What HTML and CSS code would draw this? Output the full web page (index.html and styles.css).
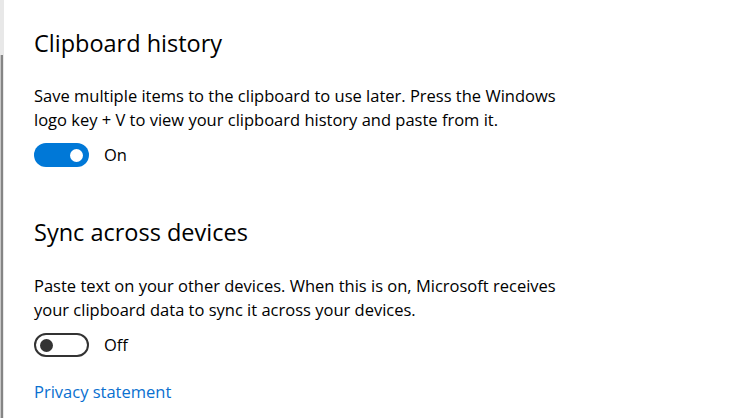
FILE: index.html
```html
<!DOCTYPE html>
<html>
<head>
<meta charset="utf-8">
<link rel="stylesheet" href="styles.css">
</head>
<body>
<div class="page">
  <div class="edge">
    <div class="edge-track"></div>
    <div class="edge-thumb"></div>
  </div>
  <main class="content">
    <section class="group">
      <h2 class="title">Clipboard history</h2>
      <p class="desc">Save multiple items to the clipboard to use later. Press the Windows<br>logo key + V to view your clipboard history and paste from it.</p>
      <div class="toggle-row">
        <span class="switch switch-on"><span class="knob"></span></span>
        <span class="state">On</span>
      </div>
    </section>
    <section class="group group-second">
      <h2 class="title">Sync across devices</h2>
      <p class="desc">Paste text on your other devices. When this is on, Microsoft receives<br>your clipboard data to sync it across your devices.</p>
      <div class="toggle-row">
        <span class="switch switch-off"><span class="knob"></span></span>
        <span class="state">Off</span>
      </div>
    </section>
    <a class="link" href="#">Privacy statement</a>
  </main>
</div>
</body>
</html>
```

FILE: styles.css
```css
html, body {
  margin: 0;
  padding: 0;
  background: #ffffff;
}
body {
  font-family: "Open Sans", "Noto Sans", sans-serif;
  color: #000000;
  width: 730px;
  height: 418px;
  overflow: hidden;
}
.page {
  display: flex;
  height: 418px;
}
.edge {
  width: 4px;
  display: flex;
  flex-direction: column;
  flex-shrink: 0;
}
.edge-track {
  height: 55px;
  background: #e8e8e8;
}
.edge-thumb {
  flex: 1;
  background: linear-gradient(to right, #c8c8c8 0, #c8c8c8 1px, #858585 1px, #858585 3px, #e8e8e8 3px);
}
.content {
  padding-left: 30px;
  flex: 1;
}
.group {
  display: flex;
  flex-direction: column;
}
.title {
  margin: 26px 0 0 0;
  font-size: 23.5px;
  line-height: 34px;
  font-weight: 400;
}
.group-second .title {
  margin-top: 48px;
}
.desc {
  margin: 24px 0 0 0;
  font-size: 16.5px;
  line-height: 24px;
}
.group-second .desc {
  margin-top: 25px;
}
.toggle-row {
  margin-top: 11px;
  display: flex;
  align-items: center;
  gap: 15px;
  height: 24px;
}
.switch {
  box-sizing: border-box;
  width: 55px;
  height: 24px;
  border-radius: 12px;
  display: flex;
  align-items: center;
}
.switch-on {
  background: #0078d7;
  justify-content: flex-end;
  padding-right: 6px;
}
.switch-on .knob {
  width: 13px;
  height: 13px;
  border-radius: 50%;
  background: #ffffff;
}
.switch-off {
  border: 2.5px solid #333333;
  padding-left: 4px;
}
.switch-off .knob {
  width: 13px;
  height: 13px;
  border-radius: 50%;
  background: #333333;
}
.state {
  font-size: 16.5px;
  line-height: 24px;
}
.link {
  display: block;
  margin-top: 23px;
  font-size: 16.5px;
  line-height: 24px;
  color: #0a70d0;
  text-decoration: none;
}
```
